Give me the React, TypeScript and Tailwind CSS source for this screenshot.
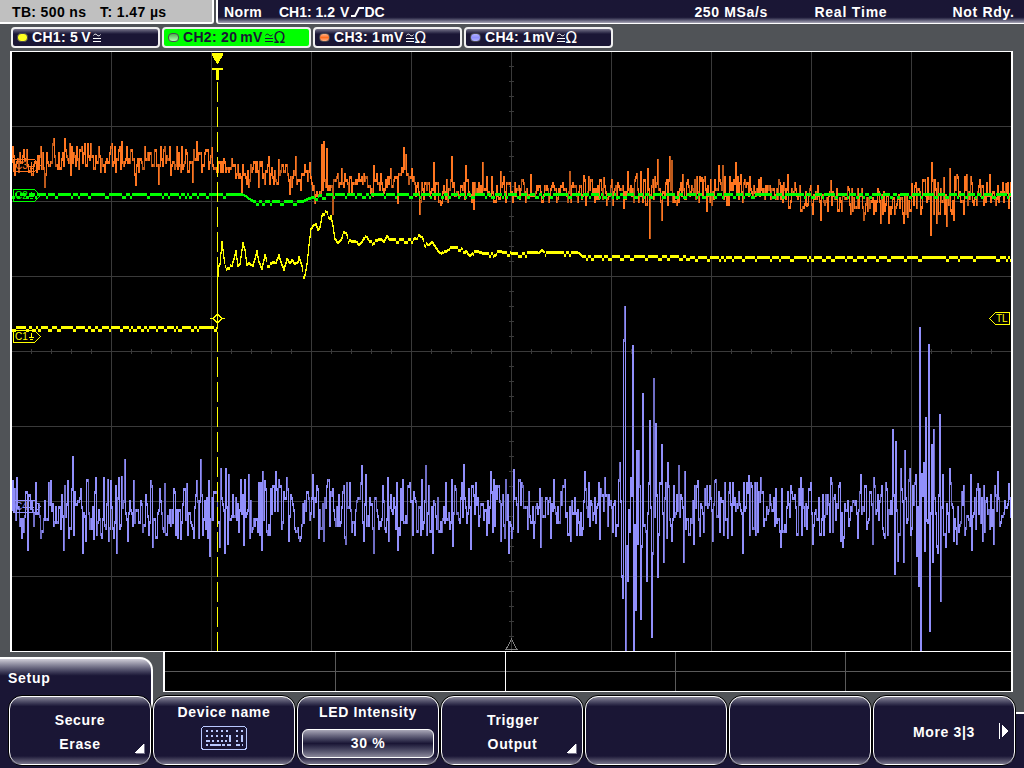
import type { ReactNode } from "react";

type Point = [number, number];
type Band = [number, number, number];

const createRandom = (seed: number) => {
  let s = seed;
  return () => {
    s = (s * 1664525 + 1013904223) % 4294967296;
    return s / 4294967296;
  };
};

const yellowKeys: Point[] = [
  [12, 328], [216, 328], [217, 276], [218, 266], [219, 264], [221, 242], [223, 258], [225, 267], [228, 266], [231, 266],
  [234, 255], [235, 251], [237, 266], [239, 264], [242, 243], [244, 250], [246, 265], [248, 263], [252, 266],
  [256, 251], [258, 262], [261, 269], [264, 255], [267, 264], [275, 263], [278, 255], [280, 262], [283, 270],
  [286, 259], [289, 263], [291, 260], [294, 264], [297, 262], [298, 257], [301, 266], [303, 275], [304, 275],
  [306, 264], [308, 245], [310, 229], [312, 226], [315, 224], [317, 230], [319, 227], [321, 216], [323, 212],
  [326, 212], [328, 215], [330, 216], [332, 226], [334, 239], [337, 243], [340, 240], [343, 233], [345, 233],
  [348, 240], [352, 242], [356, 242], [358, 245], [361, 242], [364, 236], [366, 237], [369, 242], [376, 241],
  [380, 239], [383, 242], [386, 236], [389, 240], [410, 240], [416, 239], [418, 236], [421, 237], [424, 243],
  [428, 245], [431, 242], [434, 246], [437, 251], [441, 254], [446, 251], [450, 248], [460, 248], [465, 251],
  [469, 256], [473, 252], [477, 252], [483, 254], [492, 254], [497, 252], [515, 254], [538, 253], [541, 250],
  [545, 253], [578, 253], [582, 257], [680, 257], [700, 258], [1011, 258],
];

const greenKeys: Point[] = [
  [12, 195], [243, 195], [250, 200], [254, 202], [302, 202], [308, 199], [320, 196], [330, 195], [1011, 195],
];

const orangeBands: Band[] = [
  [12, 146, 175], [40, 145, 174], [60, 143, 170], [130, 145, 176], [215, 148, 174], [235, 160, 186], [300, 163, 192],
  [308, 164, 184], [317, 186, 200], [335, 170, 195], [395, 172, 196], [400, 164, 178], [420, 176, 203],
  [480, 176, 203], [600, 176, 203], [640, 174, 210], [660, 176, 206], [780, 176, 204], [800, 184, 213],
  [900, 188, 215], [925, 175, 218], [950, 176, 214], [1011, 180, 208],
];

const orangeSpikes: Point[] = [
  [44, 186], [53, 139], [64, 139], [70, 174], [121, 142], [135, 184], [158, 183], [196, 142], [192, 181], [211, 148],
  [241, 193], [268, 157], [278, 160], [289, 193], [295, 157], [309, 163], [314, 202], [321, 145], [323, 142], [326, 149],
  [332, 213], [341, 169], [373, 166], [390, 169], [397, 202], [403, 148], [405, 155], [411, 169], [419, 213],
  [433, 163], [441, 202], [451, 157], [465, 166], [473, 208], [482, 163], [500, 172], [530, 175], [569, 172], [583, 176],
  [603, 178], [627, 172], [640, 172], [647, 169], [649, 237], [657, 160], [661, 219], [669, 157], [671, 161], [682, 175],
  [701, 178], [706, 210], [718, 166], [722, 166], [735, 163], [740, 175], [760, 178], [787, 175], [806, 205],
  [820, 219], [830, 181], [847, 187], [863, 219], [880, 222], [888, 222], [903, 222], [911, 184], [927, 178],
  [930, 234], [931, 163], [936, 222], [943, 178], [946, 225], [949, 169], [953, 219], [956, 175], [966, 175],
  [989, 175], [1005, 184],
];

const violetBands: Band[] = [
  [12, 478, 540], [610, 480, 538], [620, 470, 550], [660, 475, 550], [670, 480, 536], [885, 478, 540],
  [893, 465, 565], [910, 482, 540], [920, 470, 560], [940, 475, 550], [950, 482, 535], [1011, 482, 534],
];

const violetSpikes: Point[] = [
  [12, 481], [16, 478], [27, 549], [40, 537], [50, 481], [63, 549], [67, 481], [72, 457], [82, 552], [93, 538],
  [95, 478], [103, 478], [108, 540], [110, 481], [116, 552], [118, 478], [124, 460], [127, 540], [133, 481],
  [150, 481], [152, 546], [164, 484], [180, 538], [186, 484], [196, 481], [200, 460], [208, 481], [209, 555],
  [219, 546], [220, 469], [224, 552], [225, 469], [227, 543], [228, 475], [243, 544], [248, 475], [261, 549],
  [262, 472], [264, 481], [275, 472], [286, 478], [288, 540], [299, 540], [312, 475], [323, 540], [345, 543],
  [361, 466], [365, 475], [373, 552], [387, 478], [397, 549], [402, 480], [425, 466], [432, 552], [452, 545], [463, 465],
  [470, 548], [490, 472], [500, 540], [508, 552], [513, 470], [540, 546], [553, 480], [570, 540], [584, 472],
  [599, 538], [604, 478], [615, 535], [619, 463], [621, 576], [622, 597], [623, 340], [624, 307],
  [625, 651], [627, 580], [630, 478], [632, 346], [633, 651], [635, 609], [636, 451], [637, 543], [638, 451], [640, 618], [642, 394],
  [646, 580], [649, 421], [651, 636], [652, 553], [653, 379], [655, 424], [657, 576], [661, 445], [663, 561],
  [667, 463], [671, 540], [678, 466], [683, 561], [684, 472], [693, 543], [697, 481], [699, 535], [712, 540],
  [714, 481], [742, 552], [748, 476], [760, 478], [780, 546], [800, 478], [812, 543], [830, 478], [842, 546],
  [860, 475], [872, 543], [873, 478], [892, 430], [894, 573], [895, 442], [897, 560], [900, 469], [903, 561],
  [904, 451], [909, 469], [915, 475], [916, 555], [918, 585], [919, 328], [920, 651], [923, 463], [924, 550],
  [925, 418], [926, 520], [928, 345], [929, 630], [931, 445], [932, 561], [933, 430], [937, 552], [939, 415],
  [940, 600], [942, 475], [945, 546], [949, 469], [953, 540], [956, 543], [970, 475], [971, 549], [977, 484],
  [982, 540], [993, 543], [997, 472], [1008, 484],
];

const interpolate = (keys: number[][], x: number, column: number) => {
  let i = 1;
  while (i < keys.length - 1 && keys[i][0] < x) i++;
  const a = keys[i - 1];
  const b = keys[i];
  const t = Math.min(1, Math.max(0, (x - a[0]) / (b[0] - a[0])));
  return a[column] + (b[column] - a[column]) * t;
};

const noisyTrace = (bands: Band[], spikes: Point[], seed: number) => {
  const random = createRandom(seed);
  const peaks = new Map(spikes);
  const paths = { bright: "", dim: "" };
  let y = (bands[0][1] + bands[0][2]) / 2;
  for (let x = 12; x < 1011; x++) {
    const previous = y;
    const peak = peaks.get(x);
    if (peak !== undefined) {
      y = peak;
    } else if (random() < 0.92 || peaks.has(x - 1)) {
      const top = interpolate(bands, x, 1);
      const bottom = interpolate(bands, x, 2);
      // Keep most samples inside the band, with a few reaching its edges
      const level = random() < 0.6 ? random() : (random() + random()) / 2;
      y = Math.round((top + level * (bottom - top)) / 3) * 3;
    }
    const from = Math.min(previous, y) - 1;
    const to = Math.max(previous, y) + 2;
    paths[random() < 0.25 ? "dim" : "bright"] += `M${x + 0.5} ${from}V${to}`;
  }
  return paths;
};

const levelTrace = (keys: Point[], seed: number) => {
  const random = createRandom(seed);
  let path = "";
  let offset = 0;
  let run = 0;
  let previous = keys[0][1];
  for (let x = 12; x < 1011; x++) {
    if (run-- <= 0) {
      offset = offset === 0 && random() < 0.75 ? 3 : 0;
      run = offset ? 1 + Math.floor(random() * 3) : 1 + Math.floor(random() * 8);
    }
    const base = interpolate(keys, x, 1);
    const next = interpolate(keys, x + 1, 1);
    const flat = Math.abs(next - base) < 0.6;
    const y = flat ? base + offset : base;
    const from = flat ? y - 2 : Math.min(previous, y) - 1;
    const to = flat ? y + 1 : Math.max(previous, y) + 1;
    path += `M${x + 0.5} ${Math.round(from)}V${Math.round(to)}`;
    previous = y;
  }
  return path;
};

const orange = noisyTrace(orangeBands, orangeSpikes, 31);
const violet = noisyTrace(violetBands, violetSpikes, 77);
const yellow = levelTrace(yellowKeys, 5);
const green = levelTrace(greenKeys, 12);

const Marker = ({ y, label, color }: { y: number; label: string; color: string }) => (
  <g stroke={color} fill="none">
    <path d={`M13.5 ${y + 0.5}H34.5L40.5 ${y + 6.5}L34.5 ${y + 12.5}H13.5Z`} />
    <text x="15" y={y + 10} fill={color} stroke="none" className="font-['Liberation_Sans'] text-[10px] font-normal">
      {label}
    </text>
    <path d={`M31.5 ${y + 3}V${y + 8}M29 ${y + 7.5}H34M30 ${y + 9.5}H33`} />
  </g>
);

const Waveforms = () => {
  const columns = [111, 211, 311, 411, 511, 611, 711, 811, 911];
  const rows = [126, 201, 276, 351, 426, 501, 576];
  let grid = "";
  columns.forEach((x) => (grid += `M${x + 0.5} 52V651`));
  rows.forEach((y) => (grid += `M12 ${y + 0.5}H1011`));
  for (let x = 31; x < 1011; x += 20) grid += `M${x + 0.5} 349V354`;
  for (let y = 66; y < 651; y += 15) grid += `M509 ${y + 0.5}H514`;

  return (
    <svg width="999" height="599" viewBox="12 52 999 599" className="block" shapeRendering="crispEdges">
      <path d={grid} stroke="#3a3a3a" />
      <path d="M511.5 639L517 649.5H506Z" stroke="#808080" fill="none" />
      <path d={violet.bright} stroke="#918ffb" />
      <path d={violet.dim} stroke="#6f6dc4" />
      <path d={orange.bright} stroke="#ff7620" />
      <path d={orange.dim} stroke="#bd5a1c" />
      <path d={yellow} stroke="#ffff00" />
      <path d={green} stroke="#00ff00" />
      <Marker y={159} label="C3" color="#ff7620" />
      <Marker y={189} label="C2" color="#00ff00" />
      <Marker y={330} label="C1" color="#ffff00" />
      <Marker y={500} label="C4" color="#918ffb" />

      {/* Trigger position */}
      <path d="M217.5 82V651" stroke="#ffff00" strokeDasharray="20 5" />
      <path d="M212 53H223V55L218 64H217L212 55Z" fill="#ffff00" />
      <path d="M212 68H223V70H219V80H216V70H212Z" fill="#ffff00" />

      {/* Trigger level */}
      <path d="M210 318.5H213L217.5 314L222 318.5H225M213 318.5L217.5 323L222 318.5" stroke="#ffff00" fill="none" />
      <path d="M1009.5 312.5H995.5L989.5 318.5L995.5 324.5H1009.5Z" stroke="#ffff00" fill="#000" />
      <text x="996" y="322" fill="#ffff00" className="font-['Liberation_Sans'] text-[10px] font-normal">TL</text>
    </svg>
  );
};

const channels = [
  { name: "CH1: 5", unit: "V", ohm: false, led: "bg-[#ffff20]", active: false },
  { name: "CH2: 20", unit: "mV", ohm: true, led: "bg-linear-to-b from-[#50b050] to-[#b0ffb0]", active: true },
  { name: "CH3: 1", unit: "mV", ohm: true, led: "bg-linear-to-b from-[#ffb080] via-[#ff7020] to-[#ffb080]", active: false },
  { name: "CH4: 1", unit: "mV", ohm: true, led: "bg-linear-to-b from-[#b0b0ff] via-[#9090ff] to-[#b0b0ff]", active: false },
];

const CouplingIcon = () => (
  <svg width="8" height="10" viewBox="0 0 8 10" className="ml-[2px] mt-px" fill="none" stroke="currentColor">
    <path d="M0.5 2.5C1.5 0.5 3 1 4 2S6.5 3.5 7.5 1.5M0 5.5H8M0 8.5H8" />
  </svg>
);

const ChannelTabs = () => (
  <div className="flex h-[27px] shrink-0 gap-0.5 pl-[11px] pt-[3px]">
    {channels.map((channel) => (
      <div
        key={channel.name}
        className={`flex h-[21px] w-[149px] items-center whitespace-pre rounded-[4px] border-2 border-[#f0f0f0] pl-[4px] text-sm leading-[17px] tracking-[0.3px] ${
          channel.active
            ? "bg-[#00ff00] text-[#1a1635]"
            : "bg-linear-to-b from-[#77748a] via-[#1a1635] via-30% to-[#1a1635] text-white"
        }`}
      >
        <span className={`mr-[4px] h-[9px] w-[11px] rounded-[4px] border border-[#4a4a50] ${channel.led}`} />
        <span>{channel.name}</span>
        <span className={channel.ohm && !channel.active ? "ml-px" : "ml-[3px]"}>{channel.unit}</span>
        <CouplingIcon />
        {channel.ohm && <span className="ml-px mt-[2px] font-['DejaVu_Sans'] text-[15px] font-normal">Ω</span>}
      </div>
    ))}
  </div>
);

const SoftKey = ({ children }: { children?: ReactNode }) => (
  <div className="h-[71px] w-[144px] shrink-0 rounded-[14px] border border-black">
    <div className="relative flex h-full flex-col items-center rounded-[13px] border border-white bg-linear-to-b from-[#8a889a] via-[#1a1635] via-[14%] to-[#1a1635] to-100% text-center text-sm leading-6 tracking-[0.65px] text-white">
      <span className="absolute inset-x-0 bottom-0 h-2 rounded-b-[12px] bg-linear-to-b from-transparent to-[#77748a]" />
      {children}
    </div>
  </div>
);

const Corner = () => (
  <svg width="11" height="11" className="absolute bottom-[10px] right-[5px]" shapeRendering="crispEdges">
    <path d="M10 1V10H1L2 11H11V1Z" fill="#77748a" />
    <path d="M10 0V10H0Z" fill="#fff" />
  </svg>
);

const KeyboardIcon = () => (
  <svg width="46" height="24" viewBox="0 0 46 24" fill="none" stroke="#b9c9ff" shapeRendering="crispEdges">
    <rect x="0.5" y="0.5" width="45" height="23" rx="3" />
    <path strokeWidth="2" d="M5 5H29M5 10H27M5 19H7M21 19H26M28 19H30" strokeDasharray="2 3" />
    <path strokeWidth="2" d="M5 15H9M11 15H13M16 15H18M20 15H22M24 15H26M9 19H20M29 9V16M35 5H37M40 5H42M35 10H37M41 9V16M35 15H37M35 19H39M41 19H42M22 19H24M26 19H30" />
  </svg>
);

const App = () => {
  return (
    <div className="relative flex h-[768px] w-[1024px] flex-col overflow-hidden bg-[#505357] font-['Liberation_Sans',sans-serif] font-bold">
      {/* Status bar */}
      <div className="flex h-6 shrink-0 whitespace-pre text-sm leading-6">
        <div className="mr-0.5 flex w-[214px] gap-[13px] rounded-br-[3px] border-b-2 border-r-2 border-white bg-[#c0c0c0] pl-3 text-black">
          <span className="w-[75px] tracking-[0.35px]">TB: 500 ns</span>
          <span className="tracking-[0.4px]">T: 1.47 µs</span>
        </div>
        <div className="flex flex-1 rounded-bl-[3px] border-b border-l-2 border-white bg-linear-to-b from-[#1a1635] via-[#1a1635] via-75% to-[#aaa8b8] pl-[6px] text-white">
          <span className="w-[55px] shrink-0 tracking-[0.4px]">Norm</span>
          <span className="shrink-0">CH1: 1.2</span>
          <span className="ml-[5px] shrink-0">V</span>
          <svg width="13" height="12" className="ml-[2px] mt-[6px] shrink-0" fill="none" stroke="currentColor" strokeWidth="2">
            <path d="M0 10H4L8 2H13" />
          </svg>
          <span className="w-[330px] shrink-0">DC</span>
          <span className="w-[120px] shrink-0 tracking-[0.65px]">250 MSa/s</span>
          <span className="w-[138px] shrink-0 tracking-[0.8px]">Real Time</span>
          <span className="shrink-0 tracking-[0.7px]">Not Rdy.</span>
        </div>
      </div>

      <ChannelTabs />

      {/* Plot */}
      <div className="ml-[10px] h-[601px] w-[1003px] shrink-0 border-x-2 border-y border-white bg-black">
        <Waveforms />
      </div>

      {/* Setup tab and memory strip */}
      <div className="flex h-[60px] shrink-0">
        <div className="w-[163px] pt-[5px]">
          <div className="relative z-10 h-[58px] w-[153px] rounded-tr-[13px] border-r-2 border-t-2 border-white bg-linear-to-b from-[#d0ced8] via-[#1a1635] via-30% to-[#1a1635] pl-2 pt-[7px] text-sm leading-6 tracking-[0.7px] text-white">
            Setup
          </div>
        </div>
        <div className="h-10 w-[850px] border-b border-l-2 border-r-2 border-white bg-black">
          <svg width="846" height="39" viewBox="165 652 846 39" className="block" shapeRendering="crispEdges">
            <path d="M165 671.5H1011M335.5 652V691M675.5 652V691M845.5 652V691" stroke="#5a5a5a" />
            <path d="M505.5 652V691" stroke="#fff" />
          </svg>
        </div>
      </div>

      {/* Soft keys */}
      <div className="h-14 shrink-0 border-t-2 border-white bg-[#1a1635]">
        <div className="relative z-20 -mt-[19px] ml-2 flex">
          <SoftKey>
            <span className="mt-[11px]">Secure</span>
            <span>Erase</span>
            <Corner />
          </SoftKey>
          <SoftKey>
            <span className="mt-[3px]">Device name</span>
            <span className="mt-[2px]"><KeyboardIcon /></span>
          </SoftKey>
          <SoftKey>
            <span className="mt-[3px]">LED Intensity</span>
            <span className="relative mt-[5px] h-[29px] w-[132px] rounded-[6px] border border-white bg-linear-to-b from-[#aaa8b8] via-[#1a1635] via-50% to-[#8a889a] leading-[27px]">
              30 %
            </span>
          </SoftKey>
          <SoftKey>
            <span className="ml-[2px] mt-[11px]">Trigger</span>
            <span className="ml-px">Output</span>
            <Corner />
          </SoftKey>
          <SoftKey />
          <SoftKey />
          <SoftKey>
            <span className="mt-[23px]">More 3|3</span>
            <svg width="10" height="16" className="absolute right-[5px] top-[26px]" shapeRendering="crispEdges">
              <path d="M0.5 0V16" stroke="#fff" />
              <path d="M3 2L9 8L3 14Z" fill="#fff" />
            </svg>
          </SoftKey>
        </div>
      </div>
    </div>
  );
};

export default App;
